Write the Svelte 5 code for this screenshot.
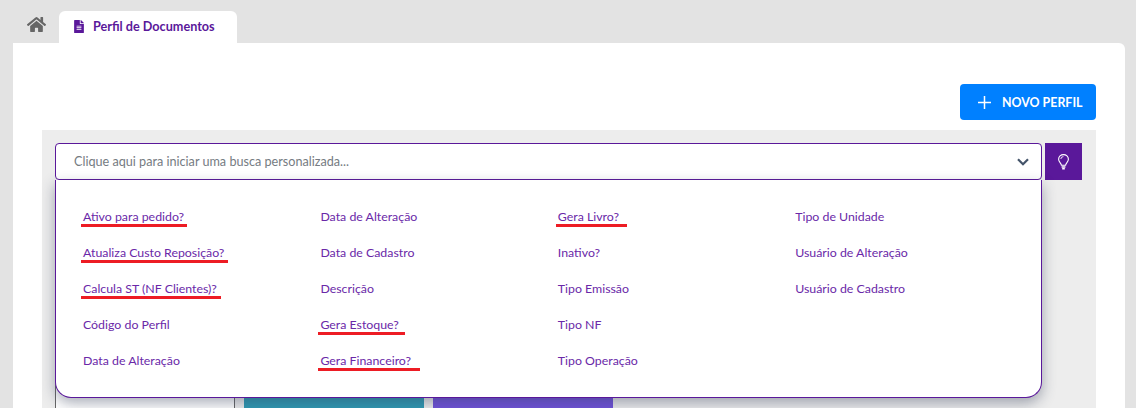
<script>
  const items = [
    { t: 'Ativo para pedido?', w: 106 },
    { t: 'Atualiza Custo Reposição?', w: 147 },
    { t: 'Calcula ST (NF Clientes)?', w: 140 },
    { t: 'Código do Perfil' },
    { t: 'Data de Alteração' },
    { t: 'Data de Alteração' },
    { t: 'Data de Cadastro' },
    { t: 'Descrição' },
    { t: 'Gera Estoque?', w: 87 },
    { t: 'Gera Financeiro?', w: 102 },
    { t: 'Gera Livro?', w: 71 },
    { t: 'Inativo?' },
    { t: 'Tipo Emissão' },
    { t: 'Tipo NF' },
    { t: 'Tipo Operação' },
    { t: 'Tipo de Unidade' },
    { t: 'Usuário de Alteração' },
    { t: 'Usuário de Cadastro' }
  ];
</script>

<div class="page">
  <nav class="tabs">
    <span class="home">
      <svg width="19" height="17" viewBox="0 0 576 512" fill="#666">
        <path d="M280.37 148.26L96 300.11V464a16 16 0 0 0 16 16l112.06-.29a16 16 0 0 0 15.92-16V368a16 16 0 0 1 16-16h64a16 16 0 0 1 16 16v95.64a16 16 0 0 0 16 16.05L464 480a16 16 0 0 0 16-16V300L295.67 148.26a12.19 12.19 0 0 0-15.3 0zM571.6 251.47L488 182.56V44.05a12 12 0 0 0-12-12h-56a12 12 0 0 0-12 12v72.61L318.47 43a48 48 0 0 0-61 0L4.34 251.47a12 12 0 0 0-1.6 16.9l25.5 31A12 12 0 0 0 45.15 301l235.22-193.74a12.19 12.19 0 0 1 15.3 0L530.9 301a12 12 0 0 0 16.9-1.6l25.5-31a12 12 0 0 0-1.7-16.93z"/>
      </svg>
    </span>
    <div class="tab">
      <svg width="10" height="13" viewBox="0 0 384 512" fill="#5a189a">
        <path d="M224 136V0H24C10.7 0 0 10.7 0 24v464c0 13.3 10.7 24 24 24h336c13.3 0 24-10.7 24-24V160H248c-13.2 0-24-10.8-24-24zm64 236c0 6.6-5.4 12-12 12H108c-6.6 0-12-5.4-12-12v-8c0-6.6 5.4-12 12-12h168c6.6 0 12 5.4 12 12v8zm0-64c0 6.6-5.4 12-12 12H108c-6.6 0-12-5.4-12-12v-8c0-6.6 5.4-12 12-12h168c6.6 0 12 5.4 12 12v8zm0-72v8c0 6.6-5.4 12-12 12H108c-6.6 0-12-5.4-12-12v-8c0-6.6 5.4-12 12-12h168c6.6 0 12 5.4 12 12zm96-114.1v6.1H256V0h6.1c6.4 0 12.5 2.5 17 7l97.9 98c4.5 4.5 7 10.6 7 16.9z"/>
      </svg>
      <span>Perfil de Documentos</span>
    </div>
  </nav>

  <main class="card">
    <div class="actions">
      <button class="new">
        <svg width="13" height="13" viewBox="0 0 13 13" stroke="#fff" stroke-width="1.5" fill="none">
          <path d="M6.500 0v13M0 6.500h13"/>
        </svg>
        <span>NOVO PERFIL</span>
      </button>
    </div>

    <section class="panel">
      <div class="search-row">
        <div class="search">
          <div class="input">
            <span>Clique aqui para iniciar uma busca personalizada...</span>
            <svg width="12" height="8" viewBox="0 0 12 8" fill="none" stroke="#44546a" stroke-width="2.2">
              <path d="M1 1.200l5 5 5-5"/>
            </svg>
          </div>
          <div class="dropdown">
            {#each items as item}
              <div class="item">
                <span class="label">
                  {item.t}
                  {#if item.w}<i class="mark" style="width: {item.w}px"></i>{/if}
                </span>
              </div>
            {/each}
          </div>
        </div>
        <button class="bulb" aria-label="Dica">
          <svg width="11" height="16" viewBox="0 0 11 16" fill="none" stroke="#fff" stroke-width="1.100">
            <path d="M3.400 11.200c0-1.800-2.800-3.200-2.800-6a4.900 4.600 0 0 1 9.800 0c0 2.800-2.800 4.200-2.800 6z"/>
            <path d="M3.600 12.900h3.800M4.200 14.800h2.600" stroke-width="1.500"/>
            <path d="M2.800 5a2.700 2.600 0 0 1 2.600-2.400" stroke-width="0.900"/>
          </svg>
        </button>
      </div>

      <div class="below">
        <div class="side"></div>
        <div class="tiles">
          <div class="tile teal"></div>
          <div class="tile violet"></div>
        </div>
      </div>
    </section>
  </main>
</div>

<style>
  :global(body) {
    margin: 0;
    background: #e3e3e3;
    overflow: hidden;
  }
  .page {
    height: 408px;
    overflow: hidden;
    padding: 0 11px 0 13px;
    font-family: "Lato", "Noto Sans", sans-serif;
    box-sizing: border-box;
  }
  .tabs {
    display: flex;
    height: 43px;
    align-items: flex-end;
  }
  .home {
    width: 46px;
    height: 32px;
    display: flex;
    align-items: center;
    justify-content: center;
    box-sizing: border-box;
    padding-bottom: 5px;
  }
  .home svg {
    display: block;
  }
  .tab {
    width: 178px;
    height: 32px;
    box-sizing: border-box;
    padding: 0 0 2px 15px;
    background: #fff;
    border-radius: 6px 6px 0 0;
    display: flex;
    align-items: center;
    gap: 9px;
    font-size: 12.650px;
    font-weight: 700;
    color: #5a189a;
  }
  .card {
    background: #fff;
    border-radius: 0 6px 0 0;
    height: 365px;
    padding: 41px 29px 0;
    box-sizing: border-box;
  }
  .actions {
    display: flex;
    justify-content: flex-end;
    height: 46px;
  }
  .new {
    width: 136px;
    height: 36px;
    border: 0;
    border-radius: 4px;
    background: #0080ff;
    color: #fff;
    font: 700 12.400px "Lato", sans-serif;
    display: flex;
    align-items: center;
    gap: 11px;
    padding: 0 0 0 18px;
  }
  .panel {
    background: #ededed;
    height: 278px;
    padding: 13px 14px 0 13px;
    box-sizing: border-box;
  }
  .search-row {
    display: flex;
    gap: 3px;
  }
  .search {
    position: relative;
    flex: 0 0 987px;
  }
  .input {
    height: 37px;
    box-sizing: border-box;
    border: 1px solid #5a189a;
    border-radius: 4px;
    background: #fff;
    display: flex;
    align-items: center;
    justify-content: space-between;
    padding: 0 12px 0 18px;
    font-size: 12.630px;
    color: #757b82;
  }
  .dropdown {
    position: absolute;
    z-index: 2;
    left: 0;
    right: 0;
    top: 37px;
    height: 218px;
    box-sizing: border-box;
    background: #fff;
    border: 1px solid #5a189a;
    border-top: 0;
    border-radius: 0 0 16px 16px;
    box-shadow: 0 5px 14px rgba(50, 60, 85, 0.42);
    padding: 19px 0 0 27px;
    display: grid;
    grid-auto-flow: column;
    grid-template-rows: repeat(5, 36px);
    grid-template-columns: repeat(4, 237.400px);
    font-size: 12.350px;
    line-height: 16px;
    color: #6a28a8;
  }
  .item {
    display: flex;
    align-items: flex-start;
    white-space: nowrap;
  }
  .label {
    display: block;
    position: relative;
    margin-top: 10px;
    height: 16px;
  }
  .mark {
    position: absolute;
    left: -2px;
    top: 15px;
    height: 3px;
    background: #ed1c24;
  }
  .bulb {
    width: 37px;
    height: 37px;
    border: 0;
    padding: 0;
    background: #5a189a;
    display: flex;
    align-items: center;
    justify-content: center;
  }
  .below {
    margin-top: 13px;
    display: flex;
    height: 220px;
  }
  .side {
    width: 178px;
    height: 100%;
    background: #fff;
    border: solid #666;
    border-width: 0 1px;
  }
  .tiles {
    display: flex;
    gap: 9px;
    margin-left: 9px;
    height: 100%;
  }
  .tile {
    width: 180px;
    height: 100%;
  }
  .teal {
    background: #2e9ab3;
  }
  .violet {
    background: #7052da;
  }
</style>
